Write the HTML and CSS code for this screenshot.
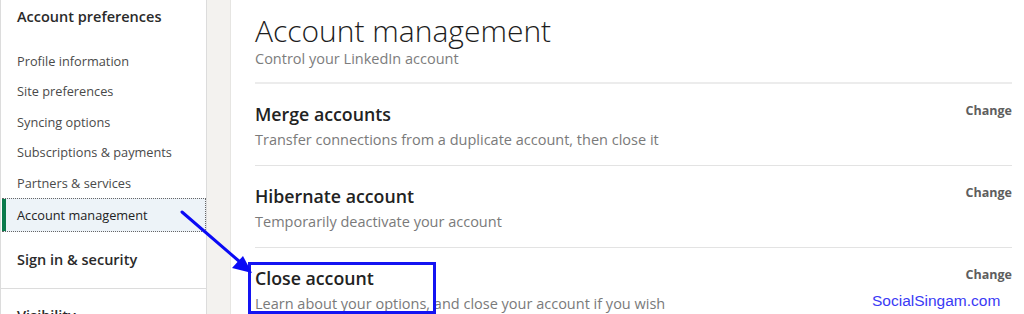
FILE: index.html
```html
<!DOCTYPE html>
<html lang="en">
<head>
    <meta charset="UTF-8">
    <title>Account management | LinkedIn</title>
    <link rel="stylesheet" href="styles.css">
</head>
<body>
    <div class="page">
        <nav class="sidebar">
            <div class="side-heading">Account preferences</div>
            <ul class="side-list">
                <li>Profile information</li>
                <li>Site preferences</li>
                <li>Syncing options</li>
                <li>Subscriptions &amp; payments</li>
                <li>Partners &amp; services</li>
                <li class="active">Account management</li>
            </ul>
            <div class="side-section">Sign in &amp; security</div>
            <div class="side-section cut">Visibility</div>
        </nav>

        <main class="main">
            <header class="main-header">
                <h1>Account management</h1>
                <p>Control your LinkedIn account</p>
            </header>
            <div class="setting">
                <div class="setting-text">
                    <h3>Merge accounts</h3>
                    <p>Transfer connections from a duplicate account, then close it</p>
                </div>
                <a class="change">Change</a>
            </div>
            <div class="setting">
                <div class="setting-text">
                    <h3>Hibernate account</h3>
                    <p>Temporarily deactivate your account</p>
                </div>
                <a class="change">Change</a>
            </div>
            <div class="setting">
                <div class="setting-text">
                    <h3>Close account</h3>
                    <p>Learn about your options, and close your account if you wish</p>
                </div>
                <a class="change">Change</a>
            </div>
        </main>

        <!-- annotation layer -->
        <div class="mark-box"></div>
        <svg class="mark-arrow" width="80" height="70" viewBox="0 0 80 70">
            <line x1="2" y1="2" x2="60" y2="52" stroke="#0a0af5" stroke-width="3" stroke-linecap="round"/>
            <polygon points="72,63 52,58 63,46" fill="#0a0af5"/>
        </svg>
        <div class="watermark">SocialSingam.com</div>
    </div>
</body>
</html>
```

FILE: styles.css
```css
body { margin: 0; background: #f3f2ef; font-family: "Open Sans", "Noto Sans", Arial, sans-serif; color: #222; overflow: hidden; }
.page { position: relative; display: flex; height: 314px; overflow: hidden; }

.sidebar { width: 205px; flex: none; background: #fff; border-left: 1px solid #dcdcdc; border-right: 1px solid #dcdcdc; margin-right: 23px; }
.side-heading { font-size: 14.5px; font-weight: 600; color: #2a2a2a; padding: 7px 0 0 16px; height: 38.75px; line-height: 20px; }
.side-list { list-style: none; margin: 0; padding: 0; }
.side-list li { font-size: 12.75px; color: #4a4a4a; padding-left: 16px; height: 30.5px; line-height: 30.5px; }
.side-list li.active { position: relative; height: 32px; line-height: 32px; background: #edf3f8; border: 1px dotted #666; border-left: none; margin-left: 1px; padding-left: 15px; color: #222; }
.side-list li.active::before { content: ''; position: absolute; left: 0; top: 0; bottom: 0; width: 4px; background: #0b7a4c; }
.side-section { font-size: 14.5px; font-weight: 600; color: #2a2a2a; padding-left: 16px; height: 56px; line-height: 56px; border-bottom: 1px solid #dcdcdc; }
.side-section.cut { border-bottom: none; height: auto; line-height: 20px; padding-top: 17px; }

.main { flex: 1; background: #fff; border-left: 1px solid #e6e5e2; padding: 0 12px 0 24px; }
.main-header { border-bottom: 2px solid #ececec; height: 82px; }
.main-header h1 { margin: 0; padding-top: 12px; font-size: 30px; font-weight: 300; line-height: 38px; color: #1d1d1d; }
.main-header p { margin: 0; font-size: 14.5px; color: #7d7d7d; line-height: 18px; }

.setting { display: flex; justify-content: space-between; height: 81px; border-bottom: 1px solid #e3e3e3; }
.setting-text h3 { margin: 0; padding-top: 18px; font-size: 17.75px; font-weight: 600; line-height: 24px; color: #222; }
.setting-text p { margin: 2px 0 0; font-size: 14.5px; color: #7a7a7a; line-height: 24px; }
.change { font-size: 12.5px; font-weight: 700; color: #5e5e5e; padding-top: 18px; line-height: 18px; }

.mark-box { position: absolute; left: 248px; top: 262px; width: 182px; height: 46px; border: 3px solid #1414f2; }
.mark-arrow { position: absolute; left: 180px; top: 210px; }
.watermark { position: absolute; left: 872px; top: 292px; font-family: "Liberation Sans", Arial, sans-serif; font-size: 15.5px; color: #3a3af5; }
```
